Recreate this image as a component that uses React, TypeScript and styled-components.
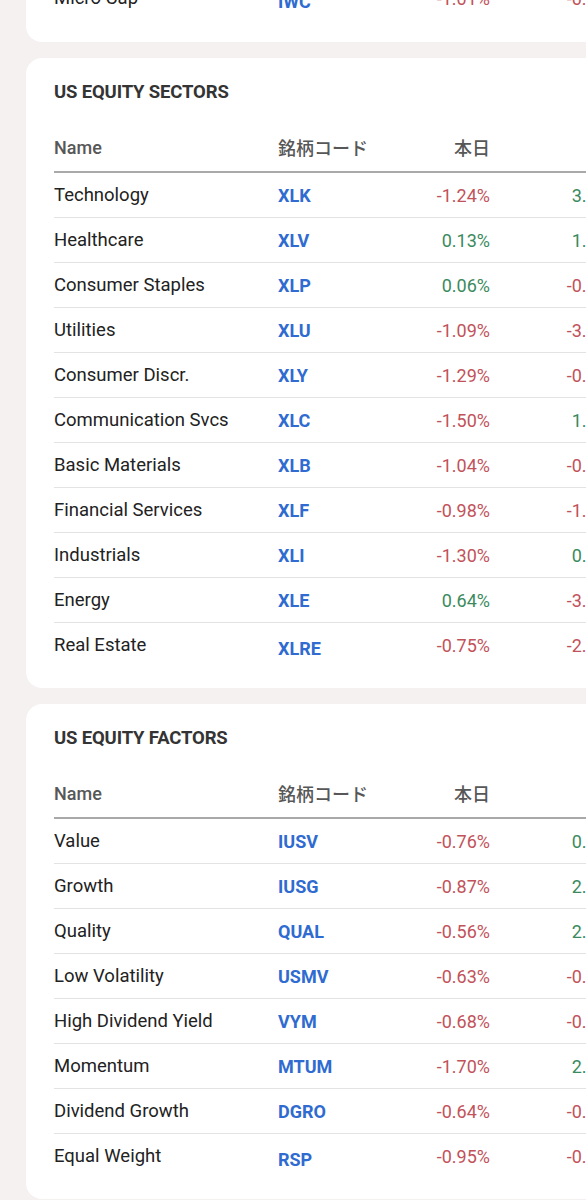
import React from "react";
import styled, { createGlobalStyle } from "styled-components";

const Global = createGlobalStyle`
  html, body {
    margin: 0;
    padding: 0;
    background: #f4f1f0;
    overflow: hidden;
  }
  body {
    font-family: Roboto, "Noto Sans CJK JP", "Noto Sans", sans-serif;
    -webkit-font-smoothing: antialiased;
  }
`;

const Page = styled.div`
  width: 586px;
  height: 1200px;
  overflow: hidden;
  display: flex;
  flex-direction: column;
  gap: 16px;
  padding-left: 26px;
  box-sizing: border-box;
`;

const Card = styled.section<{ $clipTop?: boolean }>`
  width: 660px;
  flex-shrink: 0;
  background: #ffffff;
  border-radius: 16px;
  box-sizing: border-box;
  padding: ${(p) => (p.$clipTop ? "0 0 21px 28px" : "22px 0 20px 28px")};
  margin-top: ${(p) => (p.$clipTop ? "-24px" : "0")};
`;

const Title = styled.h2`
  margin: 0 0 19px;
  height: 24px;
  line-height: 24px;
  font-size: 18.5px;
  font-weight: 700;
  color: #343434;
  letter-spacing: -0.15px;
`;

const Table = styled.div`
  display: flex;
  flex-direction: column;
`;

const Row = styled.div<{ $head?: boolean; $last?: boolean }>`
  display: grid;
  grid-template-columns: 224px 120px 92px 130px;
  align-items: center;
  height: ${(p) => (p.$head ? "48px" : "44px")};
  border-bottom: ${(p) =>
    p.$head ? "2px solid #a9a9a9" : p.$last ? "1px solid transparent" : "1px solid #e3e3e3"};
`;

const HeadCell = styled.div<{ $right?: boolean }>`
  font-size: 18px;
  font-weight: 500;
  color: #575757;
  text-align: ${(p) => (p.$right ? "right" : "left")};
`;

const NameCell = styled.div`
  font-size: 18.5px;
  color: #222222;
  white-space: nowrap;
`;

const CodeCell = styled.div<{ $drop?: boolean }>`
  font-size: 18px;
  font-weight: 700;
  color: #2f6bd0;
  padding-top: ${(p) => (p.$drop ? "7px" : "0")};
`;

const PctCell = styled.div<{ $up: boolean }>`
  font-size: 18px;
  text-align: right;
  color: ${(p) => (p.$up ? "#3b8a5e" : "#c2525a")};
`;

type Item = [string, string, string, string];

const Pct = ({ v }: { v: string }) => <PctCell $up={!v.startsWith("-")}>{v}</PctCell>;

const sectors: Item[] = [
  ["Technology", "XLK", "-1.24%", "3.12%"],
  ["Healthcare", "XLV", "0.13%", "1.05%"],
  ["Consumer Staples", "XLP", "0.06%", "-0.42%"],
  ["Utilities", "XLU", "-1.09%", "-3.21%"],
  ["Consumer Discr.", "XLY", "-1.29%", "-0.88%"],
  ["Communication Svcs", "XLC", "-1.50%", "1.37%"],
  ["Basic Materials", "XLB", "-1.04%", "-0.65%"],
  ["Financial Services", "XLF", "-0.98%", "-1.14%"],
  ["Industrials", "XLI", "-1.30%", "0.27%"],
  ["Energy", "XLE", "0.64%", "-3.46%"],
  ["Real Estate", "XLRE", "-0.75%", "-2.18%"],
];

const factors: Item[] = [
  ["Value", "IUSV", "-0.76%", "0.54%"],
  ["Growth", "IUSG", "-0.87%", "2.31%"],
  ["Quality", "QUAL", "-0.56%", "2.08%"],
  ["Low Volatility", "USMV", "-0.63%", "-0.71%"],
  ["High Dividend Yield", "VYM", "-0.68%", "-0.39%"],
  ["Momentum", "MTUM", "-1.70%", "2.62%"],
  ["Dividend Growth", "DGRO", "-0.64%", "-0.15%"],
  ["Equal Weight", "RSP", "-0.95%", "-0.47%"],
];

const DataRows = ({ items }: { items: Item[] }) => (
  <>
    {items.map((it, i) => {
      const last = i === items.length - 1;
      return (
        <Row key={it[1]} $last={last}>
          <NameCell>{it[0]}</NameCell>
          <CodeCell $drop={last}>{it[1]}</CodeCell>
          <Pct v={it[2]} />
          <Pct v={it[3]} />
        </Row>
      );
    })}
  </>
);

const Head = () => (
  <Row $head>
    <HeadCell>Name</HeadCell>
    <HeadCell>銘柄コード</HeadCell>
    <HeadCell $right>本日</HeadCell>
    <HeadCell $right />
  </Row>
);

const Section = ({ title, items }: { title: string; items: Item[] }) => (
  <Card>
    <Title>{title}</Title>
    <Table>
      <Head />
      <DataRows items={items} />
    </Table>
  </Card>
);

export default function App() {
  return (
    <>
      <Global />
      <Page>
        <Card $clipTop>
          <Table>
            <DataRows items={[["Micro Cap", "IWC", "-1.01%", "-0.93%"]]} />
          </Table>
        </Card>
        <Section title="US EQUITY SECTORS" items={sectors} />
        <Section title="US EQUITY FACTORS" items={factors} />
      </Page>
    </>
  );
}
